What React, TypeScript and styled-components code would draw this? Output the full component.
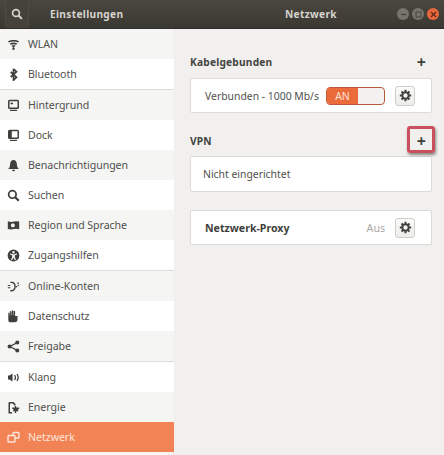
import React from "react";
import styled, { createGlobalStyle } from "styled-components";

const Global = createGlobalStyle`
  html, body { margin: 0; padding: 0; width: 444px; height: 455px; overflow: hidden; background: #f1f0ef; }
  * { box-sizing: border-box; }
  body { font-family: "Noto Sans", "Open Sans", "Liberation Sans", sans-serif; font-size: 10.6px; color: #4a4a47; }
`;

const Window = styled.div`
  width: 444px; height: 455px; display: flex; flex-direction: column; overflow: hidden;
`;
const TitleBar = styled.header`
  height: 29px; flex: none; display: flex; align-items: center;
  background: linear-gradient(#4a4740, #3a3832);
  border-bottom: 1px solid #2f2d29;
  color: #d6d3cd; font-weight: 700; font-size: 10.2px; letter-spacing: .3px;
`;
const SearchBtn = styled.div`
  width: 24px; height: 28px; margin-left: 5px; display: flex; align-items: center; justify-content: center;
  border: 1px solid #4f4c45; border-bottom: none; border-top: none; border-radius: 3px;
  background: #45423b; color: #d6d3cd;
`;
const LeftTitle = styled.div`
  width: 145px; padding-left: 21px; flex: none;
`;
const CenterTitle = styled.div`
  flex: 1; padding-left: 111px;
`;
const Controls = styled.div`
  display: flex; gap: 3px; margin-right: 5px; align-items: center;
`;
const Dot = styled.div<{ $close?: boolean }>`
  width: 12px; height: 12px; border-radius: 50%; display: flex; align-items: center; justify-content: center;
  background: ${p => (p.$close ? "#e8683c" : "#77746b")};
  color: ${p => (p.$close ? "#5b2a18" : "#45423c")};
`;
const Body = styled.div`
  flex: 1; display: flex; min-height: 0;
`;
const Sidebar = styled.nav`
  width: 174px; flex: none; background: #f5f5f4; border-right: 1px solid #e6e5e3; display: flex; flex-direction: column;
`;
const Row = styled.div<{ $alt?: boolean; $active?: boolean }>`
  height: 30px; flex: none; display: flex; align-items: center; padding-left: 7px; gap: 8px;
  width: 174px;
  font-size: 10.6px;
  letter-spacing: -.05px;
  background: ${p => (p.$active ? "#f28354" : p.$alt ? "#f5f5f4" : "#ffffff")};
  color: ${p => (p.$active ? "#fde6da" : "#50504d")};
`;
const IconBox = styled.span`
  width: 13px; height: 13px; display: flex; flex: none;
`;
const Sep = styled.div`
  height: 1px; flex: none; background: #dcdbd9; width: 174px;
`;
const Main = styled.main`
  flex: 1; padding: 23px 12px 0 16px; position: relative; background: #f1f0ef;
`;
const Heading = styled.div<{ $top?: number; $gap: number }>`
  height: 20px; display: flex; align-items: center; justify-content: space-between;
  margin-top: ${p => p.$top ?? 0}px; margin-bottom: ${p => p.$gap}px;
  font-weight: 700; font-size: 10.2px; color: #44443f; letter-spacing: .2px;
  padding-right: 6px;
`;
const Plus = styled.span`
  font-weight: 700; font-size: 16px; color: #3f3f3c; line-height: 1;
`;
const Card = styled.div<{ $h: number; $top?: number }>`
  height: ${p => p.$h}px; margin-top: ${p => p.$top ?? 0}px;
  background: #fff; border: 1px solid #dcdbd8; border-radius: 2px;
  display: flex; align-items: center;
`;
const CardText = styled.span<{ $pad: number; $bold?: boolean }>`
  padding-left: ${p => p.$pad}px; font-size: ${p => (p.$bold ? 10.6 : 10.4)}px; font-weight: ${p => (p.$bold ? 700 : 400)};
  flex: 1; white-space: nowrap; color: ${p => (p.$bold ? "#3f3f3c" : "#50504d")};
`;
const Muted = styled.span`
  color: #a9a8a4; font-size: 10.6px; margin-right: 10px;
`;
const Toggle = styled.div`
  width: 59px; height: 18px; flex: none; border: 1px solid #b8593c; border-radius: 4px; display: flex; overflow: hidden; margin-right: 10px; background: #f2f1ef;
`;
const ToggleOn = styled.div`
  width: 31px; background: #ec6b3a; color: #fbe3d8; font-size: 10.5px; display: flex; align-items: center; justify-content: center;
`;
const Gear = styled.div`
  width: 20px; height: 20px; flex: none; border: 1px solid #cfcdc9; border-radius: 3px; background: linear-gradient(#fbfbfa, #ececea);
  display: flex; align-items: center; justify-content: center; margin-right: 16px; color: #3f3f3c;
`;
const Highlight = styled.div`
  position: absolute; left: 233px; top: 97px; width: 28px; height: 27px;
  border: 3px solid #c9505c; border-radius: 3px; box-shadow: 1px 2px 3px rgba(0,0,0,.45);
`;

const I = ({ children }: { children: React.ReactNode }) => (
  <svg width="13" height="13" viewBox="0 0 13 13" fill="#3f3f3c" stroke="none">{children}</svg>
);

const SearchIcon = ({ size = 13, color = "#3f3f3c" }: { size?: number; color?: string }) => (
  <svg width={size} height={size} viewBox="0 0 13 13" fill="none" stroke={color} strokeWidth="1.8">
    <circle cx="5.4" cy="5.4" r="3.7" />
    <path d="M8.2 8.2 11.8 11.8" strokeWidth="2.2" />
  </svg>
);

const GearIcon = () => (
  <svg width="13" height="13" viewBox="0 0 13 13" fill="none" stroke="#3f3f3c">
    <circle cx="6.5" cy="6.5" r="3.2" strokeWidth="2" />
    <path strokeWidth="2" d="M6.5.8v2M6.5 10.2v2M.8 6.5h2M10.2 6.5h2M2.5 2.5l1.4 1.4M9.1 9.1l1.4 1.4M2.5 10.5l1.4-1.4M9.1 3.9l1.4-1.4" />
  </svg>
);

const items: { label: string; icon: React.ReactNode; sepAfter?: boolean }[] = [
  { label: "WLAN", icon: <I><path d="M1 3.300C3.800 1.400 9.200 1.400 12 3.300l-.8 1.300C8.400 3 4.600 3 1.800 4.600z" /><path d="M2.800 5.500c2.200-1.300 5.200-1.300 7.400 0L9.300 6.800c-1.700-.9-3.900-.9-5.600 0z" /><path d="M4.500 7.600c1.300-.6 2.700-.6 4 0L6.500 10z" /><circle cx="6.500" cy="10.800" r="1.200" /></I> },
  { label: "Bluetooth", sepAfter: true, icon: <I><path d="M6.500.8v11.400l3-3L3.700 4M6.500.8l3 3L3.700 9" fill="none" stroke="#3f3f3c" strokeWidth="1.700" /></I> },
  { label: "Hintergrund", icon: <I><path fillRule="evenodd" d="M2.500.8h8A1.500 1.500 0 0 1 12 2.300V8.500A1.500 1.500 0 0 1 10.500 10h-8A1.500 1.500 0 0 1 1 8.500V2.300A1.500 1.500 0 0 1 2.500.8zm0 1.500v6.200h8V2.300z" /><path d="M3.500 3.800h2.500v1.500H3.500zM3 10.800h7v1.200H3z" /></I> },
  { label: "Dock", icon: <I><path fillRule="evenodd" d="M2.500.8h8A1.500 1.500 0 0 1 12 2.300V8.500A1.500 1.500 0 0 1 10.500 10h-8A1.500 1.500 0 0 1 1 8.500V2.300A1.500 1.500 0 0 1 2.500.8zM4.800 2.300v6.200h5.700V2.300z" /><path d="M3 10.800h7v1.200H3z" /></I> },
  { label: "Benachrichtigungen", icon: <I><path d="M6.500 1C8.500 1 9.600 2.600 9.800 4.600L10.300 8l1.500 2H1.200l1.500-2 .5-3.400C3.400 2.600 4.500 1 6.500 1z" /><path d="M5 10.800h3a1.500 1.500 0 0 1-3 0z" /></I> },
  { label: "Suchen", icon: <SearchIcon /> },
  { label: "Region und Sprache", icon: <I><path fillRule="evenodd" d="M.8 2.300 4 3l5-.800 3.200.2v7.800L9 9.800l-5 .8-3.200-.5zM6.500 4.400a2 2 0 1 0 0 3.800 2 2 0 0 0 0-3.800z" /></I> },
  { label: "Zugangshilfen", sepAfter: true, icon: <I><path fillRule="evenodd" d="M6.500.6a5.900 5.900 0 1 1 0 11.800 5.900 5.900 0 0 1 0-11.800zm0 1.400a1.200 1.200 0 1 0 0 2.400 1.200 1.200 0 0 0 0-2.400zM3 4.600v1l2.200.7v1.600L4 11l1 .3 1.500-2.800L8 11.300l1-.3-1.200-3.100V6.300L10 5.600v-1l-3.500.8z" /></I> },
  { label: "Online-Konten", icon: <I><path d="M.8 5h2.500v1H.8zM.8 7.200h2.500v1H.8z" /><path fillRule="evenodd" d="M3.300 1.800h1.500c2.400 0 4 2 4 4.800s-1.600 4.800-4 4.800H3.300v-1.300h1.300c1.600 0 2.800-1.500 2.800-3.500s-1.200-3.500-2.800-3.500H3.300z" /><path d="M8.800 6h1.500v1.200H8.800zM10.300 2.600h1.600v1.100h-1.600zM10.600 4.700h1.600v1h-1.600z" /></I> },
  { label: "Datenschutz", icon: <I><path d="M1.300 3.200a.7.700 0 0 1 1.400 0v2h.4V1.600a.7.700 0 0 1 1.400 0v3.600h.4V1a.7.700 0 0 1 1.400 0v4.200h.4V1.500a.7.700 0 0 1 1.400 0v4.500h2.400v3.200c0 1.800-1 3-2.800 3H3.400c-1.200 0-2.100-.9-2.100-2.300z" /></I> },
  { label: "Freigabe", sepAfter: true, icon: <I><circle cx="2.600" cy="6.500" r="2" /><circle cx="10.300" cy="2.600" r="2" /><circle cx="10.300" cy="10.400" r="2" /><path d="M2.600 6.500l7.700-3.900M2.600 6.500l7.700 3.900" stroke="#3f3f3c" strokeWidth="1.200" /></I> },
  { label: "Klang", icon: <I><path d="M1 4.600h1.500L5.500 2.400v8.200L2.500 8.400H1z" /><path d="M7.600 4c.9 1.400.9 3.600 0 5M10 3c1.300 2 1.300 5 0 7" fill="none" stroke="#3f3f3c" strokeWidth="1.300" /></I> },
  { label: "Energie", icon: <I><path fillRule="evenodd" d="M2.500 1h4l2 2v1.500H7V3.700L5.800 2.500H3v8.500h2v1.500H1.500V2a1 1 0 0 1 1-1z" /><path d="M7.800 5h1.400v1.500h3v1.400h-1v2.300H9.200v1.700H7.800V10.200H6.300V7.900h-1V6.500h2.500z" /></I> },
];

export default function App() {
  return (
    <Window>
      <Global />
      <TitleBar>
        <SearchBtn><SearchIcon size={12} color="#d6d3cd" /></SearchBtn>
        <LeftTitle>Einstellungen</LeftTitle>
        <CenterTitle>Netzwerk</CenterTitle>
        <Controls>
          <Dot><svg width="7" height="7" viewBox="0 0 7 7"><path d="M1 3.500h5" stroke="currentColor" strokeWidth="1.200" /></svg></Dot>
          <Dot><svg width="7" height="7" viewBox="0 0 7 7"><rect x="1" y="1" width="5" height="5" fill="none" stroke="currentColor" /></svg></Dot>
          <Dot $close><svg width="7" height="7" viewBox="0 0 7 7"><path d="M1 1l5 5M6 1 1 6" stroke="currentColor" strokeWidth="1.200" /></svg></Dot>
        </Controls>
      </TitleBar>
      <Body>
        <Sidebar>
          {items.map((it, i) => (
            <React.Fragment key={it.label}>
              <Row $alt={i % 2 === 0}>
                <IconBox>{it.icon}</IconBox>
                {it.label}
              </Row>
              {it.sepAfter && <Sep />}
            </React.Fragment>
          ))}
          <Row $active>
            <IconBox>
              <I>
                <g fill="none" stroke="#fde6da" strokeWidth="1.400">
                  <rect x="6" y="1.500" width="6" height="5.500" rx=".8" />
                  <rect x="1" y="4.500" width="7" height="6.500" rx=".8" fill="#f28354" />
                </g>
              </I>
            </IconBox>
            Netzwerk
          </Row>
        </Sidebar>
        <Main>
          <Heading $gap={6}>Kabelgebunden <Plus>+</Plus></Heading>
          <Card $h={35}>
            <CardText $pad={14}>Verbunden - 1000 Mb/s</CardText>
            <Toggle><ToggleOn>AN</ToggleOn></Toggle>
            <Gear><GearIcon /></Gear>
          </Card>
          <Heading $top={18} $gap={5}>VPN <Plus>+</Plus></Heading>
          <Card $h={36}>
            <CardText $pad={12}>Nicht eingerichtet</CardText>
          </Card>
          <Card $h={35} $top={18}>
            <CardText $pad={14} $bold>Netzwerk-Proxy</CardText>
            <Muted>Aus</Muted>
            <Gear><GearIcon /></Gear>
          </Card>
          <Highlight />
        </Main>
      </Body>
    </Window>
  );
}
